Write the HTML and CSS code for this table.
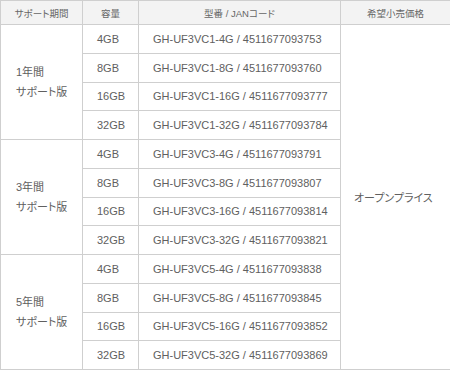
FILE: index.html
```html
<!DOCTYPE html>
<html lang="ja">
<head>
<meta charset="utf-8">
<link rel="stylesheet" href="styles.css">
</head>
<body>
<table class="spec">
  <colgroup>
    <col class="c-period"><col class="c-cap"><col class="c-model"><col class="c-price">
  </colgroup>
  <thead>
    <tr><th>サポート期間</th><th>容量</th><th>型番 / JANコード</th><th>希望小売価格</th></tr>
  </thead>
  <tbody>
    <tr><td class="period" rowspan="4">1年間<br>サポート版</td><td>4GB</td><td>GH-UF3VC1-4G / 4511677093753</td><td class="price" rowspan="12">オープンプライス</td></tr>
    <tr><td>8GB</td><td>GH-UF3VC1-8G / 4511677093760</td></tr>
    <tr><td>16GB</td><td>GH-UF3VC1-16G / 4511677093777</td></tr>
    <tr><td>32GB</td><td>GH-UF3VC1-32G / 4511677093784</td></tr>
    <tr><td class="period" rowspan="4">3年間<br>サポート版</td><td>4GB</td><td>GH-UF3VC3-4G / 4511677093791</td></tr>
    <tr><td>8GB</td><td>GH-UF3VC3-8G / 4511677093807</td></tr>
    <tr><td>16GB</td><td>GH-UF3VC3-16G / 4511677093814</td></tr>
    <tr><td>32GB</td><td>GH-UF3VC3-32G / 4511677093821</td></tr>
    <tr><td class="period" rowspan="4">5年間<br>サポート版</td><td>4GB</td><td>GH-UF3VC5-4G / 4511677093838</td></tr>
    <tr><td>8GB</td><td>GH-UF3VC5-8G / 4511677093845</td></tr>
    <tr><td>16GB</td><td>GH-UF3VC5-16G / 4511677093852</td></tr>
    <tr><td>32GB</td><td>GH-UF3VC5-32G / 4511677093869</td></tr>
  </tbody>
</table>
</body>
</html>
```

FILE: styles.css
```css
html, body {
  margin: 0;
  padding: 0;
  background: #fff;
}
body {
  font-family: "Liberation Sans", "Noto Sans CJK JP", sans-serif;
  color: #606060;
  font-feature-settings: "palt";
}
.spec {
  width: 450px;
  border-collapse: collapse;
  table-layout: fixed;
}
.c-period { width: 82px; }
.c-cap { width: 56px; }
.c-model { width: 202px; }
.c-price { width: 110px; }
.spec th, .spec td {
  border: 1px solid #cfcfcf;
  padding: 0 0 0 14px;
  text-align: left;
  vertical-align: middle;
  font-size: 11px;
  font-weight: normal;
  white-space: nowrap;
  box-sizing: border-box;
}
.spec th {
  background: #f3f3f3;
  height: 24px;
  padding: 0;
  text-align: center;
  font-size: 9.5px;
  color: #666;
}
.spec td {
  height: 28.75px;
}
.spec td.period {
  line-height: 20px;
  padding-left: 15px;
}
.spec td.price {
  padding-left: 13px;
}
```
